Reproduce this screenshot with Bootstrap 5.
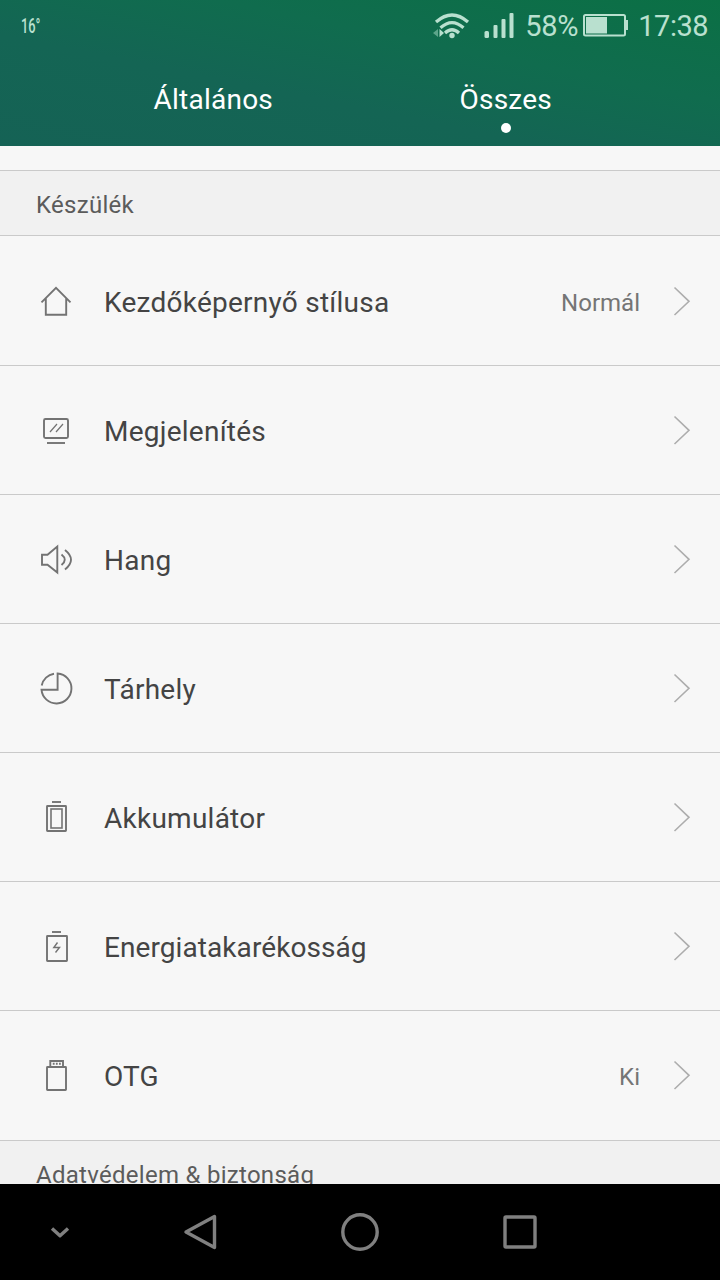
<!DOCTYPE html>
<html lang="hu">
<head>
<meta charset="utf-8">
<meta name="viewport" content="width=device-width, initial-scale=1">
<title>Beállítások</title>
<link href="https://cdn.jsdelivr.net/npm/bootstrap@5.3.0/dist/css/bootstrap.min.css" rel="stylesheet">
<style>
  body { font-family: Roboto, "Noto Sans", sans-serif; background: #f7f7f7; color: #444; }
  .screen { width: 720px; height: 1280px; }
  svg { fill: none; flex: none; display: block; }
  .top-area { height: 146px; background: linear-gradient(to top right, #156255 0%, #146554 38%, #106c4e 65%, #0b7045 100%); }
  .status-row { height: 50px; padding: 2px 12px 0 21px; color: #b9e0cf; font-size: 29px; line-height: 48px; }
  .temp { font-size: 20px; font-weight: 500; line-height: 45px; transform: scaleX(.64); transform-origin: left; }
  .signal { margin-left: 14px; }
  .pct { margin-left: 11px; letter-spacing: -.3px; }
  .charge { margin-left: 5px; }
  .clock { margin-left: 9px; letter-spacing: -.5px; }
  .tab-row { padding: 0 68px 0 67px; height: 96px; font-size: 28px; line-height: 36px; color: #fff; }
  .tab-row > div { padding-top: 32px; letter-spacing: .25px; }
  .dot { width: 10px; height: 10px; background: #fff; margin: 5px auto 0; }
  .content-area { height: 1038px; padding-top: 24px; }
  .section-title { height: 66px; background: #f1f1f1; border-top: 1px solid #cacaca; border-bottom: 1px solid #cacaca; padding: 3px 36px 0; font-size: 24px; color: #5b5b5b; letter-spacing: .28px; }
  .setting { height: 129px; border-top: 1px solid #cacaca; padding: 0 27px 0 38px; font-size: 28px; letter-spacing: .25px; }
  .setting:first-child { border-top-color: transparent; }
  .setting svg { stroke: #737373; stroke-width: 1.9; }
  .setting .label { margin-left: 30px; padding-top: 3px; }
  .setting .label.tight { letter-spacing: .08px; }
  .setting .value { font-size: 24px; color: #757575; padding-top: 3px; margin-right: 31px; letter-spacing: 0; }
  .setting svg.chev { stroke: #adadad; stroke-width: 1.6; }
  .nav-keys { height: 96px; background: #000; }
  .nav-keys > div { width: 160px; }
  .nav-keys > div:first-child { width: 120px; }
  .nav-keys svg { stroke: #808080; stroke-width: 3.4; stroke-linejoin: round; }
</style>
</head>
<body>
<div class="screen overflow-hidden d-flex flex-column">
  <header class="top-area">
    <div class="status-row d-flex align-items-center">
      <span class="temp">16°</span>
      <svg class="ms-auto" width="38" height="32" viewBox="432 10 38 32" stroke="#b9e0cf" stroke-width="3.2">
        <path d="M436 22Q452 8 468 22M440.500 27.800Q452 17.500 463.500 27.800M445 33Q452 26.500 459 33"/>
        <circle cx="452" cy="35.500" r="2.700" fill="#b9e0cf" stroke="none"/>
        <path d="M439.500 29v8l4.500-4z" fill="#b9e0cf" stroke="none"/>
        <path d="M438 29v8l-5-4z" fill="#5ca58a" stroke="none"/>
      </svg>
      <svg class="signal" width="30" height="28" viewBox="484.500 12 30 28">
        <g fill="#b9e0cf"><rect x="485" y="31" width="4.500" height="7" rx="1.500"/><rect x="494" y="25" width="4" height="13" rx="1"/><rect x="502" y="19" width="4" height="19" rx="1"/><rect x="510" y="13" width="4" height="25" rx="1"/></g>
      </svg>
      <span class="pct">58%</span>
      <svg class="charge" width="46" height="24" viewBox="583 14 46 24">
        <rect x="584" y="15" width="41" height="20.500" rx="1.500" stroke="#b9e0cf" stroke-width="2"/>
        <rect x="586" y="17" width="21" height="16.500" fill="#b9e0cf"/>
        <path d="M625.500 20h2.500v10h-2.500" fill="#b9e0cf"/>
      </svg>
      <span class="clock">17:38</span>
    </div>
    <div class="tab-row d-flex text-center">
      <div class="flex-fill w-50">Általános</div>
      <div class="flex-fill w-50">Összes<div class="dot rounded-circle"></div></div>
    </div>
  </header>

  <main class="content-area overflow-hidden">
    <div class="section-title d-flex align-items-center">Készülék</div>
    <div>
      <div class="setting d-flex align-items-center">
        <svg width="36" height="36"><path d="M3.500 19.300 18 4.800 32.500 19.300M7.800 15.500V31.700H28.200V15.500"/></svg>
        <span class="label">Kezdőképernyő stílusa</span><span class="value ms-auto">Normál</span>
        <svg class="chev" width="22" height="36"><path d="M3.500 4.500 18 18.300 3.500 32"/></svg>
      </div>
      <div class="setting d-flex align-items-center">
        <svg width="36" height="36"><rect x="6" y="7" width="24" height="19" rx="1.500"/><path d="M9 31H27"/><path d="M12 20 19 12M18 20 25 12" stroke-width="1.200"/></svg>
        <span class="label">Megjelenítés</span>
        <svg class="chev ms-auto" width="22" height="36"><path d="M3.500 4.500 18 18.300 3.500 32"/></svg>
      </div>
      <div class="setting d-flex align-items-center">
        <svg width="36" height="36"><path d="M4 13.800H9.500L19.300 5.500V31.500L9.500 23.700H4Z"/><path d="M23.500 13.500Q30 18.700 23.500 24M27 9Q39 18.700 27 28.500"/></svg>
        <span class="label">Hang</span>
        <svg class="chev ms-auto" width="22" height="36"><path d="M3.500 4.500 18 18.300 3.500 32"/></svg>
      </div>
      <div class="setting d-flex align-items-center">
        <svg width="36" height="36"><path d="M19.600 3.500V19.700H3.500A15 15 0 1 0 19.600 3.500ZM3.700 15.500A15 15 0 0 1 16 3.700"/></svg>
        <span class="label">Tárhely</span>
        <svg class="chev ms-auto" width="22" height="36"><path d="M3.500 4.500 18 18.300 3.500 32"/></svg>
      </div>
      <div class="setting d-flex align-items-center">
        <svg width="36" height="36"><path d="M14 3H23"/><rect x="9" y="7" width="19" height="25" rx=".5"/><rect x="13" y="10" width="11" height="19" stroke-width="1.600"/></svg>
        <span class="label">Akkumulátor</span>
        <svg class="chev ms-auto" width="22" height="36"><path d="M3.500 4.500 18 18.300 3.500 32"/></svg>
      </div>
      <div class="setting d-flex align-items-center">
        <svg width="36" height="36"><path d="M14 4H23"/><rect x="9" y="8" width="20" height="25" rx=".5"/><path d="M19.500 14.500 15.800 19.500H21.500L17.500 24.500" stroke-width="1.400"/></svg>
        <span class="label tight">Energiatakarékosság</span>
        <svg class="chev ms-auto" width="22" height="36"><path d="M3.500 4.500 18 18.300 3.500 32"/></svg>
      </div>
      <div class="setting d-flex align-items-center">
        <svg width="36" height="36"><path d="M12.300 10V4H25V10"/><rect x="9" y="10" width="19" height="23" rx=".5"/><path d="M14.800 6.700H23" stroke-dasharray="1.800 1.300"/></svg>
        <span class="label tight">OTG</span><span class="value ms-auto">Ki</span>
        <svg class="chev" width="22" height="36"><path d="M3.500 4.500 18 18.300 3.500 32"/></svg>
      </div>
    </div>
    <div class="section-title d-flex align-items-center" style="margin-top:1px">Adatvédelem &amp; biztonság</div>
  </main>

  <footer class="nav-keys d-flex align-items-center">
    <div class="d-flex justify-content-end"><svg width="120" height="40"><path d="M52 16.500 60 23.800 68 16.500"/></svg></div>
    <div class="d-flex justify-content-center"><svg width="40" height="40"><path d="M6 20 34.500 4.500V35.500Z"/></svg></div>
    <div class="d-flex justify-content-center"><svg width="40" height="40"><circle cx="20" cy="20" r="17.200"/></svg></div>
    <div class="d-flex justify-content-center"><svg width="40" height="40"><rect x="5" y="5" width="30" height="30" rx="1"/></svg></div>
  </footer>
</div>
<script src="https://cdn.jsdelivr.net/npm/bootstrap@5.3.0/dist/js/bootstrap.bundle.min.js"></script>
</body>
</html>
